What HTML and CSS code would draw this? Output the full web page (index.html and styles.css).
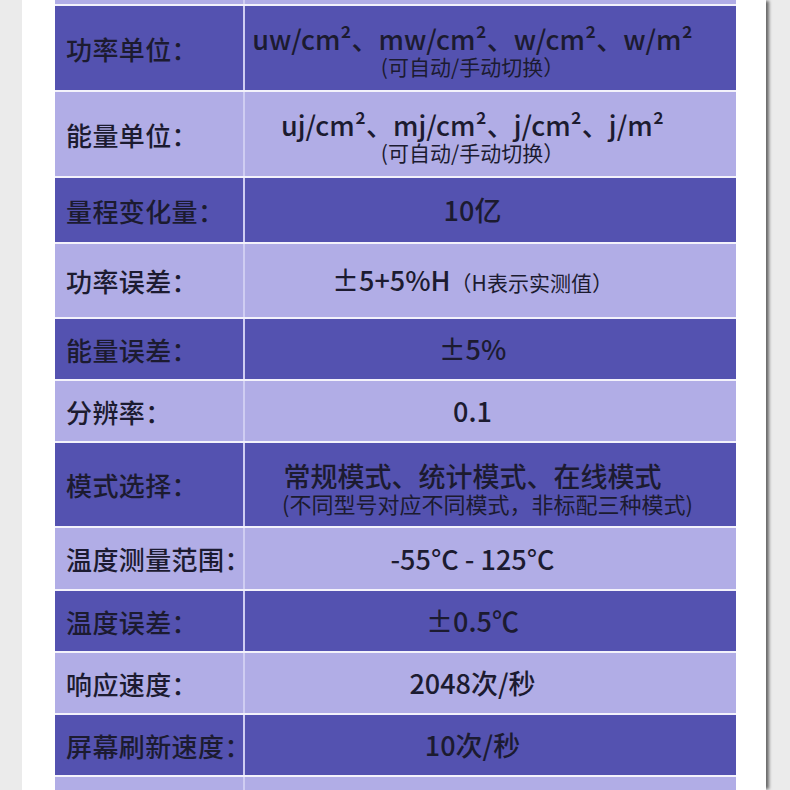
FILE: index.html
```html
<!DOCTYPE html>
<html lang="zh-CN">
<head>
<meta charset="utf-8">
<title>参数表</title>
<link rel="stylesheet" href="styles.css">
</head>
<body>
<div class="panel">
  <div class="spec">
    <div class="row light top"><div class="label"></div><div class="value"></div></div>
    <div class="row dark h84">
      <div class="label">功率单位：</div>
      <div class="value stack"><div class="main">uw/cm²、mw/cm²、w/cm²、w/m²</div><div class="sub">(可自动/手动切换）</div></div>
    </div>
    <div class="row light h84">
      <div class="label">能量单位：</div>
      <div class="value stack"><div class="main">uj/cm²、mj/cm²、j/cm²、j/m²</div><div class="sub">(可自动/手动切换）</div></div>
    </div>
    <div class="row dark h64">
      <div class="label">量程变化量：</div>
      <div class="value"><div class="main">10亿</div></div>
    </div>
    <div class="row light h73">
      <div class="label">功率误差：</div>
      <div class="value"><div class="main">±5+5%H<span class="note">（H表示实测值）</span></div></div>
    </div>
    <div class="row dark h60">
      <div class="label">能量误差：</div>
      <div class="value"><div class="main">±5%</div></div>
    </div>
    <div class="row light h60">
      <div class="label">分辨率：</div>
      <div class="value"><div class="main">0.1</div></div>
    </div>
    <div class="row dark h83">
      <div class="label">模式选择：</div>
      <div class="value stack"><div class="main">常规模式、统计模式、在线模式</div><div class="sub wide">(不同型号对应不同模式，非标配三种模式)</div></div>
    </div>
    <div class="row light h61">
      <div class="label">温度测量范围：</div>
      <div class="value"><div class="main">-55°C - 125°C</div></div>
    </div>
    <div class="row dark h60">
      <div class="label">温度误差：</div>
      <div class="value"><div class="main">±0.5℃</div></div>
    </div>
    <div class="row light h60">
      <div class="label">响应速度：</div>
      <div class="value"><div class="main">2048次/秒</div></div>
    </div>
    <div class="row dark h60">
      <div class="label">屏幕刷新速度：</div>
      <div class="value"><div class="main">10次/秒</div></div>
    </div>
    <div class="row light end"><div class="label"></div><div class="value"></div></div>
  </div>
</div>
</body>
</html>
```
FILE: styles.css
```css
html, body {
  margin: 0;
  padding: 0;
  height: 790px;
  overflow: hidden;
  background: #ebebeb;
}
body {
  font-family: "Noto Sans CJK SC", "Noto Sans", sans-serif;
  color: #1c1b30;
}
.panel {
  margin-left: 22px;
  width: 744px;
  height: 790px;
  background: #ffffff;
  box-shadow: 4px 0 3px -1px rgba(0, 0, 0, 0.55);
  padding-left: 33px;
  box-sizing: border-box;
}
.spec {
  width: 681px;
}
.row {
  display: grid;
  grid-template-columns: 188px 1fr;
  border-top: 2px solid #f3f2fb;
}
.row.top {
  border-top: 0;
  height: 4px;
}
.row.end {
  height: 13px;
}
.dark { background: #5452b0; }
.light { background: #b1ade6; }
.h84 { height: 84px; }
.h83 { height: 83px; }
.h73 { height: 73px; }
.h64 { height: 64px; }
.h61 { height: 61px; }
.h60 { height: 60px; }
.label {
  display: flex;
  align-items: center;
  padding-left: 11px;
  font-size: 26px;
  font-weight: 500;
  white-space: nowrap;
  letter-spacing: 0.4px;
}
.value {
  border-left: 2px solid #cfcdf2;
  display: flex;
  flex-direction: column;
  justify-content: center;
  align-items: center;
  padding-right: 36px;
  text-align: center;
}
.value.stack {
  padding-top: 6px;
}
.main {
  font-size: 27px;
  font-weight: 500;
  line-height: 30px;
  white-space: nowrap;
}
.sub {
  font-size: 21px;
  line-height: 24px;
  white-space: nowrap;
}
.sub.wide {
  font-size: 22px;
  margin-left: 30px;
}
.note {
  font-size: 21px;
  font-weight: 400;
}
```
